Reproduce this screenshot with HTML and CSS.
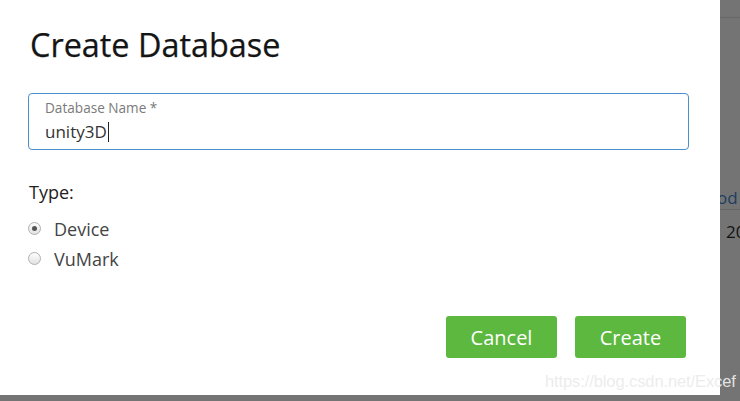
FILE: index.html
```html
<!DOCTYPE html>
<html>
<head>
<meta charset="utf-8">
<link rel="stylesheet" href="styles.css">
</head>
<body>
<div class="screen">
  <div class="row">
    <div class="dialog">
      <h1 class="title">Create Database</h1>
      <div class="field">
        <div class="field-label">Database Name *</div>
        <div class="field-value">unity3D<span class="caret"></span></div>
      </div>
      <div class="type-label">Type:</div>
      <div class="radios">
        <label class="radio"><span class="dot checked"></span><span class="radio-text">Device</span></label>
        <label class="radio"><span class="dot"></span><span class="radio-text">VuMark</span></label>
      </div>
      <div class="actions">
        <button class="btn">Cancel</button>
        <button class="btn">Create</button>
      </div>
    </div>
    <div class="behind">
      <div class="behind-top"></div>
      <div class="behind-head">od</div>
      <div class="behind-cell">20</div>
    </div>
  </div>
  <div class="bottom"></div>
  <div class="watermark">https://blog.csdn.net/Excef</div>
</div>
</body>
</html>
```
FILE: styles.css
```css
html, body {
  margin: 0;
  padding: 0;
}
body {
  background: #747474;
  font-family: "Open Sans", "Noto Sans", sans-serif;
  overflow: hidden;
}
.screen {
  position: relative;
  width: 740px;
  height: 401px;
}
.row {
  display: flex;
  height: 395px;
}
.dialog {
  width: 720px;
  height: 395px;
  background: #fff;
  box-sizing: border-box;
  padding: 22px 31px 0 28px;
  display: flex;
  flex-direction: column;
}
.title {
  margin: 0 0 0 2px;
  font-size: 32.4px;
  font-weight: 400;
  color: #151515;
  line-height: 44px;
  -webkit-text-stroke: 0.25px #151515;
}
.field {
  margin-top: 27px;
  height: 57px;
  box-sizing: border-box;
  border: 1px solid #4a8fd2;
  border-radius: 4px;
  padding: 4px 16px 0;
}
.field-label {
  font-size: 13.6px;
  color: #7a7a7a;
  line-height: 19px;
}
.field-value {
  font-size: 17px;
  color: #333;
  line-height: 24px;
  margin-top: 3px;
  display: flex;
  align-items: center;
}
.caret {
  display: inline-block;
  width: 1px;
  height: 20px;
  background: #222;
  margin-left: 1px;
}
.type-label {
  margin-top: 30px;
  margin-left: 1px;
  font-size: 18px;
  color: #222;
  line-height: 24px;
}
.radios {
  margin-top: 13px;
  display: flex;
  flex-direction: column;
  gap: 6px;
}
.radio {
  display: flex;
  align-items: center;
  height: 24px;
}
.dot {
  width: 13px;
  height: 13px;
  box-sizing: border-box;
  border: 1px solid #b0b0b0;
  border-radius: 50%;
  background: linear-gradient(#fdfdfd, #e2e2e2);
  position: relative;
  margin-top: -2px;
}
.dot.checked::after {
  content: "";
  position: absolute;
  left: 3px;
  top: 3px;
  width: 5px;
  height: 5px;
  border-radius: 50%;
  background: #555;
}
.radio-text {
  margin-left: 13px;
  font-size: 18px;
  color: #444;
}
.actions {
  margin-top: 45px;
  display: flex;
  justify-content: flex-end;
  gap: 18px;
  padding-right: 3px;
}
.btn {
  width: 111px;
  height: 42px;
  border: none;
  border-radius: 3px;
  background: #5cb83e;
  color: #fff;
  font-family: "Open Sans", "Noto Sans", sans-serif;
  font-size: 20px;
  padding: 0;
}
.behind {
  flex: 1;
  position: relative;
  overflow: hidden;
}
.behind-top {
  height: 17px;
  border-bottom: 1px solid #686868;
}
.behind-head {
  margin-top: 168px;
  height: 23px;
  line-height: 23px;
  font-size: 17px;
  color: #1c3e62;
  margin-left: -3px;
  border-bottom: 1px solid #666;
  white-space: nowrap;
}
.behind-cell {
  margin-top: 10px;
  font-size: 17px;
  color: #111;
  margin-left: 6px;
  line-height: 24px;
  white-space: nowrap;
}
.bottom {
  height: 6px;
}
.watermark {
  position: absolute;
  left: 545px;
  top: 372px;
  font-family: "Liberation Sans", Arial, sans-serif;
  font-size: 16.5px;
  color: rgba(235, 235, 235, 0.95);
  letter-spacing: -0.1px;
}
```
